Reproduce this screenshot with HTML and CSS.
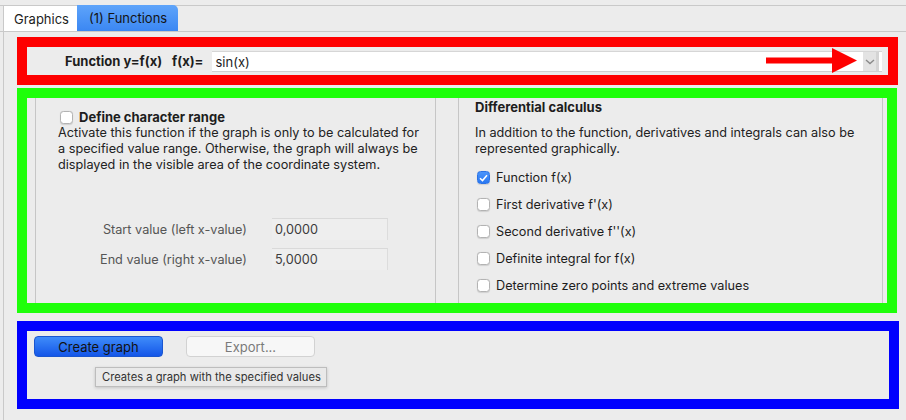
FILE: index.html
```html
<!DOCTYPE html>
<html lang="en">
<head>
<meta charset="utf-8">
<title>Functions</title>
<link rel="stylesheet" href="styles.css">
</head>
<body>
<div class="tabbar">
  <div class="tab tab-plain">Graphics</div>
  <div class="tab tab-active">(1) Functions</div>
</div>
<div class="pane">
  <div class="frame frame-red">
    <span class="lbl lbl-func">Function y=f(x)</span>
    <span class="lbl lbl-fx">f(x)=</span>
    <div class="combo">
      <span class="combo-text">sin(x)</span>
      <span class="combo-btn"><svg width="10" height="6" viewBox="0 0 10 6"><path d="M1 1 L5 4.5 L9 1" fill="none" stroke="#8a8a8a" stroke-width="1.4"/></svg></span>
    </div>
    <svg class="arrow" width="120" height="28" viewBox="0 0 120 28">
      <rect x="0" y="10.5" width="68" height="6" fill="#fe0000"/>
      <polygon points="66,1 91,13.5 66,26" fill="#fe0000"/>
    </svg>
  </div>

  <div class="frame frame-green">
    <div class="panel panel-left">
      <label class="check-head">
        <span class="cb"></span>
        <span class="head-text">Define character range</span>
      </label>
      <p class="desc">Activate this function if the graph is only to be calculated for a specified value range. Otherwise, the graph will always be displayed in the visible area of the coordinate system.</p>
      <div class="range">
        <span class="range-label">Start value (left x-value)</span>
        <span class="field">0,0000</span>
        <span class="range-label">End value (right x-value)</span>
        <span class="field">5,0000</span>
      </div>
    </div>
    <div class="panel panel-right">
      <div class="head-text">Differential calculus</div>
      <p class="desc desc-right">In addition to the function, derivatives and integrals can also be represented graphically.</p>
      <ul class="options">
        <li class="opt"><span class="cb cb-on"><svg width="9" height="8" viewBox="0 0 9 8"><path d="M1 4.2 L3.5 6.6 L8 1.2" fill="none" stroke="#fff" stroke-width="1.5"/></svg></span>Function f(x)</li>
        <li class="opt"><span class="cb"></span>First derivative f'(x)</li>
        <li class="opt"><span class="cb"></span>Second derivative f''(x)</li>
        <li class="opt"><span class="cb"></span>Definite integral for f(x)</li>
        <li class="opt"><span class="cb"></span>Determine zero points and extreme values</li>
      </ul>
    </div>
  </div>

  <div class="frame frame-blue">
    <div class="buttons">
      <button class="btn btn-primary">Create graph</button>
      <button class="btn btn-disabled">Export...</button>
    </div>
    <div class="tooltip">Creates a graph with the specified values</div>
  </div>
</div>
</body>
</html>
```
FILE: styles.css
```css
* { box-sizing: border-box; }

body {
  margin: 0;
  width: 906px;
  height: 420px;
  overflow: hidden;
  background: #ececec;
  font-family: Inter, "Liberation Sans", sans-serif;
  font-size: 12.7px;
  color: #1d1d1d;
}

/* tabs */
.tabbar {
  margin-top: 5px;
  height: 27px;
  border-top: 1px solid #c9c9c9;
  border-bottom: 1px solid #c9c9c9;
  display: flex;
  padding-left: 3px;
}
.tab {
  height: 25px;
  display: flex;
  align-items: center;
  font-size: 13px;
}
.tab-plain {
  width: 74px;
  padding-left: 10px;
  background: #fff;
  border-left: 1px solid #c9c9c9;
}
.tab-active {
  width: 101px;
  height: 26px;
  margin-top: -1px;
  padding-left: 12px;
  background: linear-gradient(#5ea4fa, #3b87f3);
  border-radius: 0 5px 0 0;
  color: #141414;
}

/* pane */
.pane {
  margin-left: 3px;
  border-left: 1px solid #c9c9c9;
  padding: 5px 0 0 13px;
  height: 388px;
}

.frame { position: relative; }

.frame-red {
  width: 881px;
  height: 48px;
  border: 10px solid #fe0000;
  display: flex;
  align-items: center;
  padding: 0 6px 0 38px;
}
.lbl { font-weight: 700; font-size: 13px; }
.lbl-func { margin-right: 10px; }
.lbl-fx { margin-right: 9px; }

.combo {
  flex: 1;
  height: 21px;
  margin-top: 1px;
  background: #fff;
  border-top: 1px solid #d6d6d6;
  border-bottom: 1px solid #d0d0d0;
  display: flex;
  align-items: center;
}
.combo-text { flex: 1; padding-left: 3px; font-size: 13px; }
.combo-btn {
  width: 16px;
  height: 19px;
  margin-right: 3px;
  background: #e3e3e3;
  border-right: 3px solid #d4d4d4;
  display: flex;
  align-items: center;
  justify-content: center;
}

.arrow {
  position: absolute;
  left: 739px;
  top: 0;
}

/* green */
.frame-green {
  width: 880px;
  height: 225px;
  margin-top: 3px;
  border: 10px solid #1eff0a;
  display: flex;
  padding-left: 8px;
}
.panel {
  height: 100%;
  border-left: 1px solid #c6c6c6;
  border-right: 1px solid #c6c6c6;
}
.panel-left {
  width: 401px;
  padding: 11px 10px 0 22px;
}
.panel-right {
  width: 425px;
  margin-left: 22px;
  padding: 1px 0 0 16px;
}

.check-head {
  display: flex;
  align-items: center;
  height: 16px;
  padding-left: 2px;
}
.head-text {
  font-weight: 700;
  font-size: 13px;
  line-height: 16px;
}
.cb {
  width: 13px;
  height: 13px;
  flex: none;
  border: 1px solid #b3b3b3;
  border-radius: 3.5px;
  background: #fff;
  box-shadow: 0 0.5px 1px rgba(0,0,0,0.12);
  margin-right: 6px;
  display: flex;
  align-items: center;
  justify-content: center;
}
.cb-on {
  background: linear-gradient(#4a94fa, #2a78f2);
  border-color: #2a72e6;
}

.desc {
  margin: 0;
  line-height: 16px;
  color: #222;
}
.desc-right {
  margin-top: 10px;
}

.range {
  margin-top: 45px;
  display: grid;
  grid-template-columns: 189px 116px;
  column-gap: 25px;
  row-gap: 8px;
}
.range-label {
  text-align: right;
  color: #555;
  align-self: center;
}
.field {
  height: 22px;
  display: flex;
  align-items: center;
  padding-left: 3px;
  background: #eeeeee;
  border-top: 1px solid #d9d9d9;
  border-right: 1px solid #dcdcdc;
  color: #3c3c3c;
}

.options {
  list-style: none;
  margin: 7px 0 0;
  padding: 0;
}
.opt {
  height: 27px;
  display: flex;
  align-items: center;
  padding-left: 2px;
}

/* blue */
.frame-blue {
  width: 882px;
  height: 88px;
  margin-top: 8px;
  border: 10px solid #0000fe;
  padding: 5px 0 0 7px;
}
.buttons { display: flex; }
.btn {
  width: 129px;
  height: 21px;
  border-radius: 4px;
  font-family: inherit;
  font-size: 13px;
  padding: 0;
}
.btn-primary {
  background: linear-gradient(#3f8cfa, #1456e8);
  border: 1px solid #1a56d0;
  color: #121212;
}
.btn-disabled {
  margin-left: 23px;
  background: #f7f7f7;
  border: 1px solid #d2d2d2;
  color: #7a7a7a;
}

.tooltip {
  position: absolute;
  left: 68px;
  top: 36px;
  width: 232px;
  height: 20px;
  padding-left: 6px;
  display: flex;
  align-items: center;
  background: #e9e9e9;
  border: 1px solid #bdbdbd;
  box-shadow: 0 1px 3px rgba(0,0,0,0.18);
  font-size: 11.2px;
  color: #333;
  white-space: nowrap;
}
```
